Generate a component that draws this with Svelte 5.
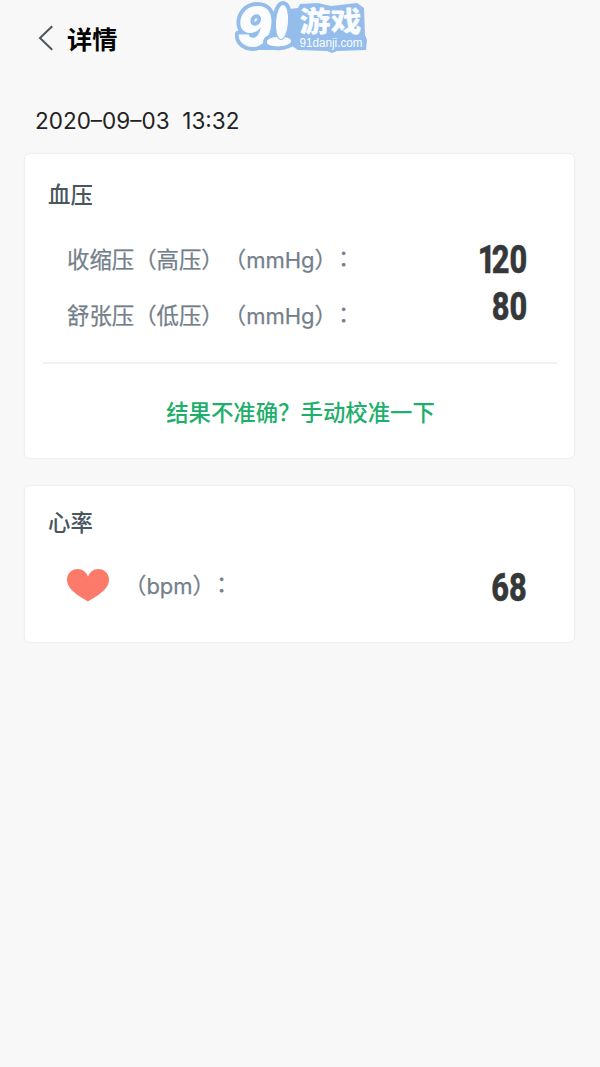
<script lang="ts">
  const pressures = [
    { label: '收缩压（高压）', unit: 'mmHg', value: 120 },
    { label: '舒张压（低压）', unit: 'mmHg', value: 80 },
  ];
  const heartRate = 68;
</script>

{#snippet unitLabel(unit: string)}
  （<span class="unit">{unit}</span>）<span class="colon">：</span>
{/snippet}

{#snippet reading(value: number)}
  <strong>{#each String(value) as d}<span class:narrow={d === '1'}>{d}</span>{/each}</strong>
{/snippet}

<main class="page">
  <header class="topbar">
    <button class="back" aria-label="返回">
      <svg viewBox="0 0 16 26" width="16" height="26">
        <path d="M14.200 1.200 2 13 14.200 24.800" />
      </svg>
    </button>
    <h1>详情</h1>
  </header>

  <svg class="watermark" viewBox="0 0 140 56" width="140" height="56" aria-label="91游戏">
    <path class="plate" d="M51 10 68 8 70 4 88 3 101 6 127 3 134 8 135 35 137 40 136 50 107 51 102 53 97 51 68 50 62 46 50 50 15 50 30 34Z" />
    <g class="outline">
      <text class="nine" x="7" y="46" textLength="35" lengthAdjust="spacingAndGlyphs">9</text>
      <ellipse cx="49" cy="41.500" rx="12" ry="4.800" transform="rotate(-3 49 41.500)" />
      <ellipse cx="52" cy="22" rx="6" ry="17" transform="rotate(4 52 22)" />
      <ellipse class="flat" cx="49" cy="41.500" rx="12" ry="4.800" transform="rotate(-3 49 41.500)" />
      <ellipse class="pin" cx="52" cy="22" rx="6" ry="17" transform="rotate(4 52 22)" />
    </g>
    <text class="name" x="69.500" y="31.500" textLength="62" lengthAdjust="spacingAndGlyphs">游戏</text>
    <text class="site" x="69.500" y="47" textLength="63" lengthAdjust="spacingAndGlyphs">91danji.com</text>
  </svg>

  <time>2020–09–03&nbsp; 13:32</time>

  <section class="card pressure">
    <h2>血压</h2>
    <div class="readings">
      <div class="labels">
        {#each pressures as p}
          <p>{p.label}{@render unitLabel(p.unit)}</p>
        {/each}
      </div>
      <div class="values">
        {#each pressures as p}
          {@render reading(p.value)}
        {/each}
      </div>
    </div>
    <button class="calibrate">结果不准确？手动校准一下</button>
  </section>

  <section class="card heart">
    <h2>心率</h2>
    <div class="rate">
      <svg viewBox="0 0 42 33" width="42" height="33">
        <path d="M21 32.500C15 28.500 0 21.500 0 10.800 0 4.500 4.700 0 10.800 0 15.500 0 19.300 3 21 7.800 22.700 3 26.500 0 31.200 0 37.300 0 42 4.500 42 10.800 42 21.500 27 28.500 21 32.500Z" />
      </svg>
      <p>{@render unitLabel('bpm')}</p>
      {@render reading(heartRate)}
    </div>
  </section>
</main>

<style>
  :global(body) {
    margin: 0;
    background: #f8f8f8;
  }

  .page {
    position: relative;
    box-sizing: border-box;
    min-height: 1067px;
    padding: 0 25px 0 24px;
    background: #f8f8f8;
    font-family: Inter, "Noto Sans CJK SC", sans-serif;
  }

  h1, h2, p { margin: 0; }

  button {
    padding: 0;
    border: 0;
    background: none;
    font: inherit;
  }

  .topbar {
    display: flex;
    align-items: center;
    box-sizing: border-box;
    height: 78px;
    padding: 1px 0 0 14px;
  }

  .back {
    display: flex;
    width: 29px;
    padding-bottom: 4px;
  }

  .back path {
    fill: none;
    stroke: #4d565e;
    stroke-width: 2;
  }

  h1 {
    padding-top: 1px;
    font-size: 25.2px;
    font-weight: 700;
    line-height: 36px;
    color: #050505;
  }

  .watermark {
    position: absolute;
    top: 0;
    left: 230px;
    overflow: visible;
  }

  .plate { fill: #94bdec; }

  .outline {
    fill: #fafcff;
    stroke: #94bdec;
    stroke-width: 8px;
    stroke-linejoin: round;
    paint-order: stroke;
  }

  .flat { stroke: none; }

  .pin { stroke-width: 2px; }

  .nine {
    font: italic 900 54px Inter, sans-serif;
  }

  .name {
    font: 900 28px "Noto Sans CJK SC", sans-serif;
    fill: #fafcff;
  }

  .site {
    font: 12px "Liberation Sans", sans-serif;
    fill: #fafcff;
  }

  time {
    display: block;
    height: 75px;
    padding-left: 11px;
    font-size: 22.5px;
    line-height: 86px;
    color: #222;
    white-space: nowrap;
  }

  .card {
    box-sizing: border-box;
    border: 1px solid #efefef;
    border-radius: 6px;
    background: #fff;
    box-shadow: 0 0 2px rgba(0, 0, 0, .03);
  }

  .pressure {
    height: 306px;
    padding: 24px 17px 0 18px;
  }

  .heart {
    height: 158px;
    margin-top: 26px;
    padding: 20px 17px 0 18px;
  }

  h2 {
    padding-left: 5px;
    font-size: 22.4px;
    font-weight: 500;
    line-height: 33px;
    color: #4b555d;
  }

  .readings {
    display: flex;
    justify-content: space-between;
    height: 153px;
    box-sizing: border-box;
    padding: 20px 30px 0 24px;
    border-bottom: 2px solid #f0f1f1;
  }

  p {
    height: 56px;
    font-family: "Noto Sans CJK SC", sans-serif;
    font-size: 22.4px;
    line-height: 54px;
    color: #747f8b;
    white-space: nowrap;
    text-spacing-trim: space-all;
    -webkit-text-stroke: .25px #747f8b;
  }

  .unit {
    font-family: Inter, sans-serif;
    font-size: 22px;
    line-height: 1;
  }

  .colon {
    position: relative;
    top: -2px;
    left: 1px;
  }

  .values {
    display: flex;
    flex-direction: column;
    padding-top: 6px;
  }

  strong {
    font-family: Roboto, sans-serif;
    font-size: 38px;
    font-weight: 800;
    line-height: 47px;
    text-align: right;
    color: #353739;
    transform: scaleX(.81);
    transform-origin: right;
    -webkit-text-stroke: .5px #353739;
  }

  .narrow { margin-right: -4.5px; }

  .calibrate {
    display: block;
    width: 100%;
    height: 94px;
    padding-left: 1px;
    font-family: "Noto Sans CJK SC", sans-serif;
    font-size: 22.4px;
    font-weight: 500;
    color: #1eaf6b;
    text-spacing-trim: space-all;
  }

  .rate {
    display: flex;
    align-items: center;
    height: 92px;
    padding: 0 30px 0 24px;
  }

  .rate path { fill: #fb7a69; }

  .rate p { margin-left: 15px; }

  .rate strong {
    margin-left: auto;
    padding-top: 6px;
  }
</style>
